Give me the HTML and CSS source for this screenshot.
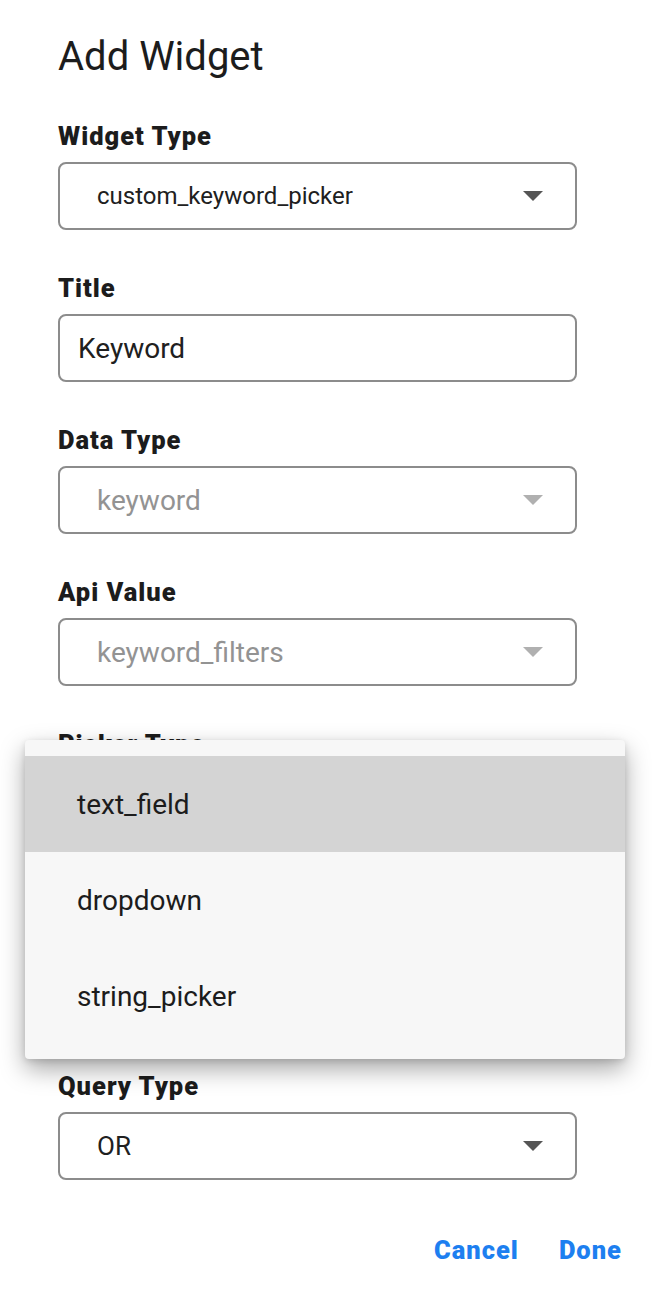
FILE: index.html
```html
<!DOCTYPE html>
<html lang="en">
<head>
<meta charset="utf-8">
<title>Add Widget</title>
<link rel="stylesheet" href="styles.css">
</head>
<body>
<div class="dialog">
  <h1 class="title">Add Widget</h1>

  <div class="field">
    <div class="label">Widget Type</div>
    <div class="box select"><span class="value">custom_keyword_picker</span><span class="arrow"></span></div>
  </div>

  <div class="field">
    <div class="label">Title</div>
    <div class="box input"><span class="value">Keyword</span></div>
  </div>

  <div class="field">
    <div class="label">Data Type</div>
    <div class="box select disabled"><span class="value">keyword</span><span class="arrow"></span></div>
  </div>

  <div class="field">
    <div class="label">Api Value</div>
    <div class="box select disabled"><span class="value">keyword_filters</span><span class="arrow"></span></div>
  </div>

  <div class="field field-under-menu">
    <div class="label">Picker Type</div>
    <div class="box select"><span class="value"></span><span class="arrow"></span></div>
  </div>

  <div class="field">
    <div class="label">Query Type</div>
    <div class="box select"><span class="value value-or">OR</span><span class="arrow"></span></div>
  </div>

  <div class="actions">
    <button class="btn">Cancel</button>
    <button class="btn">Done</button>
  </div>

  <div class="menu">
    <div class="menu-item selected">text_field</div>
    <div class="menu-item">dropdown</div>
    <div class="menu-item">string_picker</div>
  </div>
</div>
</body>
</html>
```

FILE: styles.css
```css
* { box-sizing: border-box; }
html, body {
  margin: 0;
  padding: 0;
  background: #ffffff;
}
body {
  font-family: Roboto, "Liberation Sans", Arial, sans-serif;
  color: #1c1c1c;
  width: 654px;
  height: 1316px;
  overflow: hidden;
}
.dialog {
  position: relative;
  padding: 29px 32px 0 58px;
  height: 1316px;
}
.title {
  margin: 0 0 37px 0;
  font-size: 40px;
  line-height: 56px;
  font-weight: 400;
  color: #1c1c1c;
}
.field {
  width: 519px;
  margin-bottom: 44px;
}
.field-under-menu {
  margin-bottom: 234px;
}
.label {
  font-size: 25.5px;
  line-height: 28px;
  font-weight: 900;
  letter-spacing: 1px;
  color: #1c1c1c;
  margin-bottom: 12px;
}
.box {
  height: 68px;
  border: 2px solid #8c8c8c;
  border-radius: 8px;
  display: flex;
  align-items: center;
  font-size: 24px;
  color: #202020;
}
.input { padding-left: 18px; }
.input .value { font-size: 28px; }
.select {
  padding-left: 37px;
  padding-right: 32px;
  justify-content: space-between;
}
.value-or { font-size: 26px; }
.disabled .value { color: #939393; font-size: 28px; }
.arrow {
  width: 0;
  height: 0;
  border-left: 10px solid transparent;
  border-right: 10px solid transparent;
  border-top: 10px solid #555555;
}
.disabled .arrow { border-top-color: #b0b0b0; }
.actions {
  display: flex;
  justify-content: flex-end;
  gap: 40px;
  margin-top: 46px;
}
.btn {
  border: 0;
  background: none;
  padding: 0;
  font-family: inherit;
  font-size: 25.5px;
  font-weight: 900;
  letter-spacing: 1px;
  line-height: 48px;
  color: #1d7ff0;
}
.menu {
  position: absolute;
  left: 25px;
  top: 740px;
  width: 600px;
  height: 319px;
  background: #f7f7f7;
  border-radius: 4px;
  padding: 16px 0 15px;
  box-shadow: 0 10px 24px rgba(0,0,0,0.35), 0 2px 6px rgba(0,0,0,0.12);
}
.menu-item {
  height: 96px;
  display: flex;
  align-items: center;
  padding-left: 52px;
  font-size: 28px;
  color: #1c1c1c;
}
.menu-item.selected { background: #d4d4d4; }
```
